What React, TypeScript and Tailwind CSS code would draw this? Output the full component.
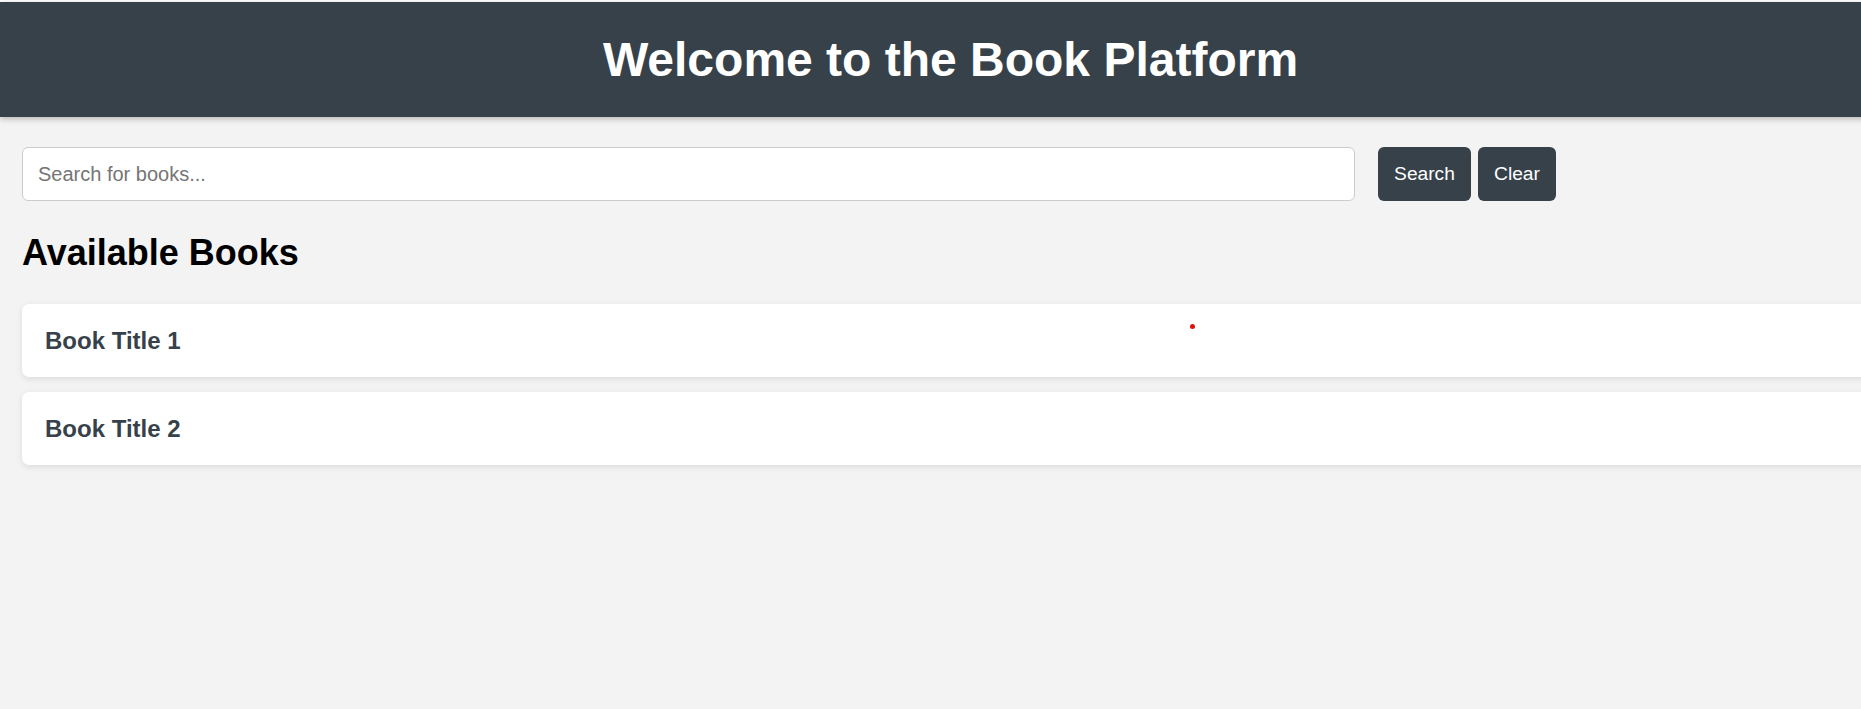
import React from "react";

export default function App() {
  const books = ["Book Title 1", "Book Title 2"];
  return (
    <div className="min-h-screen w-full overflow-hidden bg-[#f3f3f3] font-['Liberation_Sans',Arial,sans-serif]">
      <div className="h-[2px] bg-white" />
      <header className="flex h-[115px] w-[calc(100%+40px)] items-center justify-center bg-[#36414a] shadow-[0_2px_6px_rgba(0,0,0,0.25)]">
        <h1 className="text-[48px] font-bold leading-[55px] text-white">Welcome to the Book Platform</h1>
      </header>
      <main className="pl-[22px] pt-[30px]">
        <div className="flex items-center">
          <input
            type="text"
            placeholder="Search for books..."
            className="h-[54px] w-[1333px] rounded-[6px] border border-[#cccccc] bg-white px-[15px] text-[20px] text-[#333] outline-none placeholder:text-[#757575]"
          />
          <button className="ml-[23px] h-[54px] w-[93px] rounded-[6px] bg-[#36414a] text-[19.2px] text-white">Search</button>
          <button className="ml-[7px] h-[54px] w-[78px] rounded-[6px] bg-[#36414a] text-[19.2px] text-white">Clear</button>
        </div>
        <h2 className="mt-[31px] mb-[30px] text-[36px] font-bold leading-[42px] text-black">Available Books</h2>
        <div className="flex flex-col gap-[15px]">
          {books.map((b, i) => (
            <div
              key={b}
              className="relative flex h-[73px] w-[calc(100%+40px)] items-center rounded-[7px] bg-white pl-[23px] shadow-[0_2px_6px_rgba(0,0,0,0.1)]"
            >
              <h3 className="text-[24px] font-bold text-[#36414a]">{b}</h3>
              {i === 0 && (
                <span className="absolute left-[1168px] top-[20px] h-[5px] w-[5px] rounded-full bg-[#e01010]" />
              )}
            </div>
          ))}
        </div>
      </main>
    </div>
  );
}
